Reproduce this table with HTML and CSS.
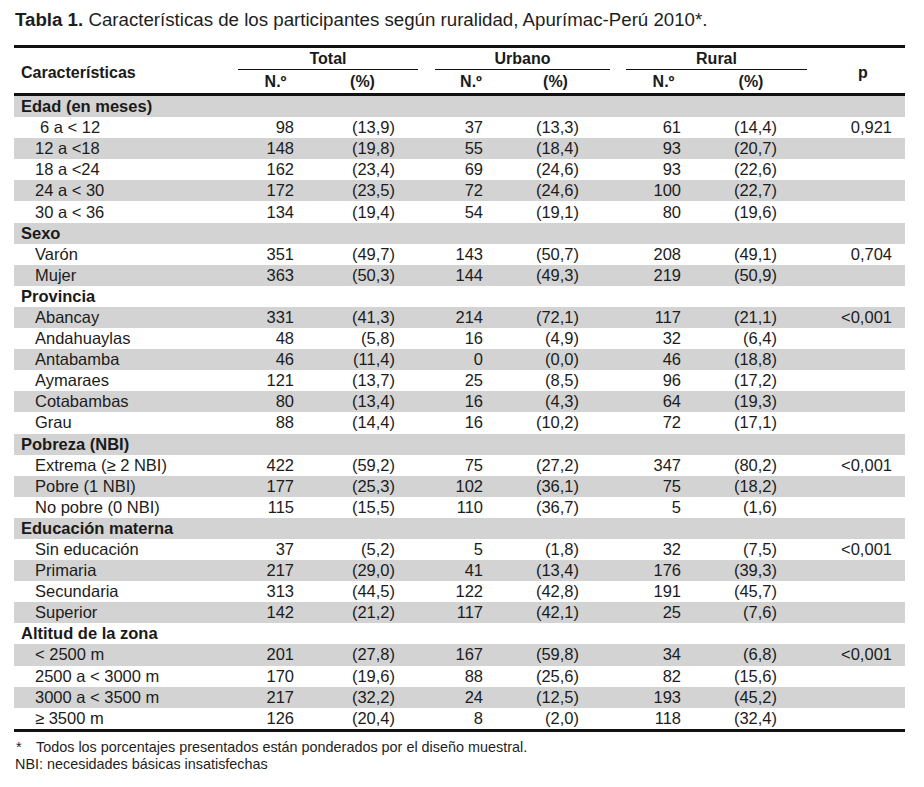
FILE: index.html
```html
<!DOCTYPE html>
<html lang="es">
<head>
<meta charset="utf-8">
<title>Tabla 1</title>
<link rel="stylesheet" href="styles.css">
</head>
<body>
<div class="page">
  <h1 class="title"><b>Tabla 1.</b> Características de los participantes según ruralidad, Apurímac-Perú 2010*.</h1>
  <table class="data">
    <colgroup>
      <col class="c-label"><col class="c-n"><col class="c-p"><col class="c-gap">
      <col class="c-n2"><col class="c-p2"><col class="c-gap2">
      <col class="c-n3"><col class="c-p3"><col class="c-pv">
    </colgroup>
    <thead>
      <tr class="h1">
        <th rowspan="2" class="hlabel">Características</th>
        <th colspan="2" class="grp">Total</th>
        <th class="sp"></th>
        <th colspan="2" class="grp">Urbano</th>
        <th class="sp"></th>
        <th colspan="2" class="grp">Rural</th>
        <th rowspan="2" class="hp">p</th>
      </tr>
      <tr class="h2">
        <th class="hn">N.º</th><th class="hpc">(%)</th><th class="sp"></th>
        <th class="hn">N.º</th><th class="hpc">(%)</th><th class="sp"></th>
        <th class="hn">N.º</th><th class="hpc">(%)</th>
      </tr>
    </thead>
    <tbody>
      <tr class="g"><td class="cat" colspan="10">Edad (en meses)</td></tr>
      <tr><td class="lab"><span class="pad6">6 a &lt; 12</span></td><td class="n">98</td><td class="pc">(13,9)</td><td></td><td class="n">37</td><td class="pc">(13,3)</td><td></td><td class="n">61</td><td class="pc">(14,4)</td><td class="pv">0,921</td></tr>
      <tr><td class="lab">12 a &lt;18</td><td class="n">148</td><td class="pc">(19,8)</td><td></td><td class="n">55</td><td class="pc">(18,4)</td><td></td><td class="n">93</td><td class="pc">(20,7)</td><td class="pv"></td></tr>
      <tr><td class="lab">18 a &lt;24</td><td class="n">162</td><td class="pc">(23,4)</td><td></td><td class="n">69</td><td class="pc">(24,6)</td><td></td><td class="n">93</td><td class="pc">(22,6)</td><td class="pv"></td></tr>
      <tr><td class="lab">24 a &lt; 30</td><td class="n">172</td><td class="pc">(23,5)</td><td></td><td class="n">72</td><td class="pc">(24,6)</td><td></td><td class="n">100</td><td class="pc">(22,7)</td><td class="pv"></td></tr>
      <tr><td class="lab">30 a &lt; 36</td><td class="n">134</td><td class="pc">(19,4)</td><td></td><td class="n">54</td><td class="pc">(19,1)</td><td></td><td class="n">80</td><td class="pc">(19,6)</td><td class="pv"></td></tr>
      <tr class="g"><td class="cat" colspan="10">Sexo</td></tr>
      <tr><td class="lab">Varón</td><td class="n">351</td><td class="pc">(49,7)</td><td></td><td class="n">143</td><td class="pc">(50,7)</td><td></td><td class="n">208</td><td class="pc">(49,1)</td><td class="pv">0,704</td></tr>
      <tr><td class="lab">Mujer</td><td class="n">363</td><td class="pc">(50,3)</td><td></td><td class="n">144</td><td class="pc">(49,3)</td><td></td><td class="n">219</td><td class="pc">(50,9)</td><td class="pv"></td></tr>
      <tr class="g"><td class="cat" colspan="10">Provincia</td></tr>
      <tr><td class="lab">Abancay</td><td class="n">331</td><td class="pc">(41,3)</td><td></td><td class="n">214</td><td class="pc">(72,1)</td><td></td><td class="n">117</td><td class="pc">(21,1)</td><td class="pv">&lt;0,001</td></tr>
      <tr><td class="lab">Andahuaylas</td><td class="n">48</td><td class="pc">(5,8)</td><td></td><td class="n">16</td><td class="pc">(4,9)</td><td></td><td class="n">32</td><td class="pc">(6,4)</td><td class="pv"></td></tr>
      <tr><td class="lab">Antabamba</td><td class="n">46</td><td class="pc">(11,4)</td><td></td><td class="n">0</td><td class="pc">(0,0)</td><td></td><td class="n">46</td><td class="pc">(18,8)</td><td class="pv"></td></tr>
      <tr><td class="lab">Aymaraes</td><td class="n">121</td><td class="pc">(13,7)</td><td></td><td class="n">25</td><td class="pc">(8,5)</td><td></td><td class="n">96</td><td class="pc">(17,2)</td><td class="pv"></td></tr>
      <tr><td class="lab">Cotabambas</td><td class="n">80</td><td class="pc">(13,4)</td><td></td><td class="n">16</td><td class="pc">(4,3)</td><td></td><td class="n">64</td><td class="pc">(19,3)</td><td class="pv"></td></tr>
      <tr><td class="lab">Grau</td><td class="n">88</td><td class="pc">(14,4)</td><td></td><td class="n">16</td><td class="pc">(10,2)</td><td></td><td class="n">72</td><td class="pc">(17,1)</td><td class="pv"></td></tr>
      <tr class="g"><td class="cat" colspan="10">Pobreza (NBI)</td></tr>
      <tr><td class="lab">Extrema (≥ 2 NBI)</td><td class="n">422</td><td class="pc">(59,2)</td><td></td><td class="n">75</td><td class="pc">(27,2)</td><td></td><td class="n">347</td><td class="pc">(80,2)</td><td class="pv">&lt;0,001</td></tr>
      <tr><td class="lab">Pobre (1 NBI)</td><td class="n">177</td><td class="pc">(25,3)</td><td></td><td class="n">102</td><td class="pc">(36,1)</td><td></td><td class="n">75</td><td class="pc">(18,2)</td><td class="pv"></td></tr>
      <tr><td class="lab">No pobre (0 NBI)</td><td class="n">115</td><td class="pc">(15,5)</td><td></td><td class="n">110</td><td class="pc">(36,7)</td><td></td><td class="n">5</td><td class="pc">(1,6)</td><td class="pv"></td></tr>
      <tr class="g"><td class="cat" colspan="10">Educación materna</td></tr>
      <tr><td class="lab">Sin educación</td><td class="n">37</td><td class="pc">(5,2)</td><td></td><td class="n">5</td><td class="pc">(1,8)</td><td></td><td class="n">32</td><td class="pc">(7,5)</td><td class="pv">&lt;0,001</td></tr>
      <tr><td class="lab">Primaria</td><td class="n">217</td><td class="pc">(29,0)</td><td></td><td class="n">41</td><td class="pc">(13,4)</td><td></td><td class="n">176</td><td class="pc">(39,3)</td><td class="pv"></td></tr>
      <tr><td class="lab">Secundaria</td><td class="n">313</td><td class="pc">(44,5)</td><td></td><td class="n">122</td><td class="pc">(42,8)</td><td></td><td class="n">191</td><td class="pc">(45,7)</td><td class="pv"></td></tr>
      <tr><td class="lab">Superior</td><td class="n">142</td><td class="pc">(21,2)</td><td></td><td class="n">117</td><td class="pc">(42,1)</td><td></td><td class="n">25</td><td class="pc">(7,6)</td><td class="pv"></td></tr>
      <tr class="g"><td class="cat" colspan="10">Altitud de la zona</td></tr>
      <tr><td class="lab">&lt; 2500 m</td><td class="n">201</td><td class="pc">(27,8)</td><td></td><td class="n">167</td><td class="pc">(59,8)</td><td></td><td class="n">34</td><td class="pc">(6,8)</td><td class="pv">&lt;0,001</td></tr>
      <tr><td class="lab">2500 a &lt; 3000 m</td><td class="n">170</td><td class="pc">(19,6)</td><td></td><td class="n">88</td><td class="pc">(25,6)</td><td></td><td class="n">82</td><td class="pc">(15,6)</td><td class="pv"></td></tr>
      <tr><td class="lab">3000 a &lt; 3500 m</td><td class="n">217</td><td class="pc">(32,2)</td><td></td><td class="n">24</td><td class="pc">(12,5)</td><td></td><td class="n">193</td><td class="pc">(45,2)</td><td class="pv"></td></tr>
      <tr class="last"><td class="lab">≥ 3500 m</td><td class="n">126</td><td class="pc">(20,4)</td><td></td><td class="n">8</td><td class="pc">(2,0)</td><td></td><td class="n">118</td><td class="pc">(32,4)</td><td class="pv"></td></tr>
    </tbody>
  </table>
  <div class="notes">
    <p><span class="ast">*</span>Todos los porcentajes presentados están ponderados por el diseño muestral.</p>
    <p>NBI: necesidades básicas insatisfechas</p>
  </div>
</div>
</body>
</html>
```

FILE: styles.css
```css
html, body {
  margin: 0;
  padding: 0;
  background: #ffffff;
}
body {
  font-family: "Liberation Sans", Arial, sans-serif;
  color: #1c1c1c;
}
.page {
  padding: 10px 0 0 15px;
}
.title {
  margin: 0;
  font-size: 18.7px;
  line-height: 20px;
  font-weight: normal;
  color: #1e1e1e;
}
.title b {
  font-weight: bold;
}
.data {
  margin-top: 15px;
  margin-left: -1px;
  width: 891px;
  border-collapse: separate;
  border-spacing: 0;
  table-layout: fixed;
  font-size: 16.5px;
}
.c-label { width: 224px; }
.c-n { width: 90px; }
.c-p { width: 90px; }
.c-gap { width: 17px; }
.c-n2 { width: 87px; }
.c-p2 { width: 88px; }
.c-gap2 { width: 16px; }
.c-n3 { width: 90px; }
.c-p3 { width: 91px; }
.c-pv { width: 98px; }

.data th {
  padding: 0;
  font-weight: bold;
  color: #1a1a1a;
  font-size: 16px;
}
.h1 th {
  border-top: 3px solid #111;
  height: 21px;
  line-height: 21px;
}
.h1 th.grp {
  border-bottom: 1px solid #111;
  text-align: center;
}
.h1 th.hlabel, .h1 th.hp {
  border-bottom: 3px solid #111;
}
.h1 th.hlabel {
  text-align: left;
  padding-left: 7px;
  padding-top: 3px;
}
.h1 th.hp {
  text-align: center;
  padding-left: 14px;
  padding-top: 3px;
}
.h2 th {
  height: 23px;
  line-height: 23px;
  border-bottom: 3px solid #111;
  text-align: center;
}
.h2 th.hn { padding-right: 15px; }
.h2 th.hpc { padding-right: 21px; }

.data td {
  padding: 0;
  height: 21.1px;
  line-height: 21px;
  white-space: nowrap;
}
.data tbody tr:nth-child(odd) td {
  background: #d3d3d3;
}
.data tbody tr.last td {
  border-bottom: 3px solid #111;
}
.data td.cat {
  font-weight: bold;
  padding-left: 7px;
  color: #1a1a1a;
}
.data td.lab {
  padding-left: 21px;
}
.pad6 {
  padding-left: 5px;
}
.data td.n, .data td.pc, .data td.pv {
  text-align: right;
}
.data tr td:nth-child(2) { padding-right: 34px; }
.data tr td:nth-child(3) { padding-right: 23px; }
.data tr td:nth-child(5) { padding-right: 39px; }
.data tr td:nth-child(6) { padding-right: 31px; }
.data tr td:nth-child(8) { padding-right: 35px; }
.data tr td:nth-child(9) { padding-right: 30px; }
.data tr td:nth-child(10) { padding-right: 13px; }

.notes {
  margin-top: 7px;
  font-size: 14.4px;
  line-height: 17px;
  color: #1e1e1e;
}
.notes p {
  margin: 0;
}
.ast {
  display: inline-block;
  width: 20px;
  padding-left: 1px;
}
```
